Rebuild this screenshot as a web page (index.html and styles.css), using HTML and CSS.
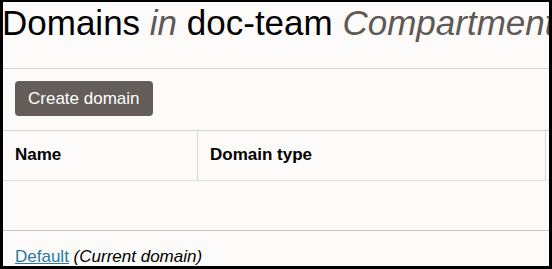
FILE: index.html
```html
<!DOCTYPE html>
<html lang="en">
<head>
	<meta charset="UTF-8">
	<title>Domains</title>
	<link rel="stylesheet" href="styles.css">
</head>
<body>
	<div class="frame">
	  <div class="page-head">
	    <h1 class="title">Domains <em>in</em> doc-team <em>Compartment</em></h1>
	  </div>
	  <div class="toolbar">
	    <button class="button" type="button">Create domain</button>
	  </div>
	  <div class="list">
	    <div class="list-head">
	      <div class="cell col-name">Name</div>
	      <div class="cell col-type">Domain type</div>
	      <div class="cell col-rest"></div>
	    </div>
	    <div class="list-empty"></div>
	    <div class="list-row">
	      <a class="link" href="javascript:;">Default</a> <em>(Current domain)</em>
	    </div>
	  </div>
	</div>
</body>
</html>
```

FILE: styles.css
```css
    body {
    	margin: 0;
    	padding: 0;
    	background-color: #000;
    }

    .frame {
    	box-sizing: border-box;
    	width: 552px;
    	height: 269px;
    	border-style: solid;
    	border-color: #000;
    	border-width: 2px 3px 3px 3px;
    	background-color: #fcfbfa;
    	color: #000;
    	font-family: "Liberation Sans", Arial, sans-serif;
    	overflow: hidden;
    }

    .page-head {
    	padding: 1px 0 25px 0;
    	border-bottom: 1px solid #d4d1cf;
    }
    .title {
    	margin: 0;
    	font-size: 35px;
    	font-weight: normal;
    	line-height: 40px;
    	white-space: nowrap;
    	text-indent: -1px;
    }
    .title em {
    	color: #5e5955;
    }

    .toolbar {
    	padding: 12px 12px 14px;
    }
    .button {
    	height: 35px;
    	padding: 0 13px;
    	border: 0;
    	border-radius: 4px;
    	background-color: #645d59;
    	color: #fff;
    	font-family: "Liberation Sans", Arial, sans-serif;
    	font-size: 17px;
    	line-height: 35px;
    }

    .list {
    	width: 700px;
    	border-top: 1px solid #d4d1cf;
    	font-size: 17px;
    	line-height: 20px;
    }
    .list-head {
    	display: flex;
    	border-bottom: 1px solid #e2dfdd;
    }
    .cell {
    	box-sizing: border-box;
    	height: 49px;
    	padding: 14px 12px 15px;
    	font-weight: bold;
    }
    .col-name {
    	width: 195px;
    	border-right: 1px solid #d9d6d4;
    }
    .col-type {
    	width: 348px;
    	border-right: 1px solid #d9d6d4;
    }
    .col-rest {
    	flex: 1;
    }

    .list-empty {
    	height: 49px;
    	border-bottom: 1px solid #c8c4c2;
    }
    .list-row {
    	padding: 16px 12px 12px;
    	white-space: nowrap;
    }
    .link {
    	color: #2a7a9f;
    	text-decoration: underline;
    }
```
